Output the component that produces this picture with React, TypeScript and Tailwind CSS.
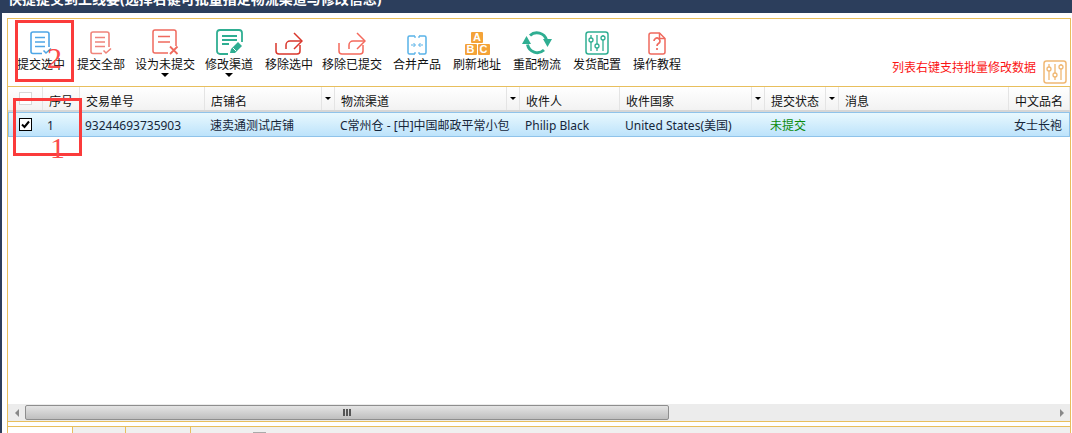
import React from "react";

const font = "font-['Noto_Sans','Noto_Sans_CJK_SC',sans-serif]";

type IconProps = { color: string };

function DocIcon({ color }: IconProps) {
  return (
    <svg width="22" height="24" viewBox="0 0 22 24" fill="none" stroke={color} strokeWidth="1.6">
      <path d="M12 22.500H3a2 2 0 0 1-2-2V3a2 2 0 0 1 2-2h14a2 2 0 0 1 2 2v13" />
      <path d="M5 6.500h10M5 11h10M5 15.500h10" />
      <path d="M13.500 19.500l2.500 2.500 5-4.500" />
    </svg>
  );
}

function UnsubmitIcon() {
  return (
    <svg width="27" height="26" viewBox="0 0 27 26" fill="none" stroke="#ef6a5e" strokeWidth="1.500">
      <path d="M16 24H3a2 2 0 0 1-2-2V3a2 2 0 0 1 2-2h19a2 2 0 0 1 2 2v14" />
      <path d="M6 7.500h12M6 13h12" />
      <path d="M18 17.500l7.500 7.500M25.500 17.500L18 25" strokeWidth="1.800" />
    </svg>
  );
}

function EditIcon() {
  return (
    <svg width="27" height="26" viewBox="0 0 27 26" fill="none" stroke="#2fae92" strokeWidth="1.800">
      <path d="M12 25H4a3 3 0 0 1-3-3V4a3 3 0 0 1 3-3h19a3 3 0 0 1 3 3v9" />
      <path d="M6 7h15M6 11h15M6 15h7" strokeWidth="2" />
      <path d="M14 24l1-4 7-7 4 4-7 7z" fill="#2fae92" stroke="none" />
      <path d="M17 19l3 3" stroke="#ffffff" strokeWidth="1" />
    </svg>
  );
}

function ExportIcon({ color }: IconProps) {
  return (
    <svg width="28" height="24" viewBox="0 0 28 24" fill="none" stroke={color} strokeWidth="1.500">
      <path d="M1 12v8a3 3 0 0 0 3 3h18a3 3 0 0 0 3-3v-6" />
      <path d="M11 18v-4a4 4 0 0 1 4-4h12" />
      <path d="M19 2l8 8-8 8" />
    </svg>
  );
}

function MergeIcon() {
  return (
    <svg width="20" height="20" viewBox="0 0 20 20" fill="none" stroke="#58b2e8" strokeWidth="1.500">
      <path d="M8 1H2.500A1.500 1.500 0 0 0 1 2.500v15A1.500 1.500 0 0 0 2.500 19H8M12 1h5.500A1.500 1.500 0 0 1 19 2.500v15a1.500 1.500 0 0 1-1.500 1.500H12" />
      <path d="M8 1v2M8 17v2M12 1v2M12 17v2" strokeWidth="1.200" />
      <path d="M4 10h4M6.500 8l2 2-2 2M16 10h-4M13.500 8l-2 2 2 2" strokeWidth="1" />
    </svg>
  );
}

function BlocksIcon() {
  const block = "flex h-[11px] w-[12px] items-center justify-center rounded-[1px] bg-[#f4a338] text-[11px] font-bold leading-none text-white font-['Liberation_Sans',sans-serif]";
  return (
    <div className="flex w-[24px] flex-col items-center gap-[1px]">
      <div className={block}>A</div>
      <div className="flex gap-[1px]">
        <div className={block}>B</div>
        <div className={block}>C</div>
      </div>
    </div>
  );
}

function RefreshIcon() {
  return (
    <svg width="32" height="25" viewBox="0 0 32 25" fill="none" stroke="#2fae92" strokeWidth="3">
      <path d="M9 5.500A10 10 0 0 1 25.500 10" />
      <path d="M6.500 14.500A10 10 0 0 0 23 20" />
      <path d="M1 14h9L5.500 6z" fill="#2fae92" stroke="none" />
      <path d="M22 9h9l-4.500 8z" fill="#2fae92" stroke="none" />
    </svg>
  );
}

function SlidersIcon({ color, size }: { color: string; size: number }) {
  return (
    <svg width={size} height={size} viewBox="0 0 24 24" fill="none" stroke={color} strokeWidth="1.300">
      <rect x="1" y="1" width="22" height="22" rx="2.500" strokeWidth="1.500" />
      <path d="M6 4v3M6 11v9M12 4v9M12 17v3M18 4v1M18 9v11" />
      <circle cx="6" cy="9" r="2" />
      <circle cx="12" cy="15" r="2" />
      <circle cx="18" cy="7" r="2" />
    </svg>
  );
}

function HelpIcon() {
  return (
    <svg width="18" height="23" viewBox="0 0 18 23" fill="none" stroke="#ef6a5e" strokeWidth="1.500">
      <path d="M11.500 1H3a2 2 0 0 0-2 2v17a2 2 0 0 0 2 2h12a2 2 0 0 0 2-2V6.500z" />
      <path d="M11.500 1v5.500H17" />
      <path d="M6 9a3 3 0 1 1 4.500 2.600c-1 .6-1.500 1.200-1.500 2.400" strokeWidth="1.700" />
      <path d="M9 16v2" strokeWidth="1.700" />
    </svg>
  );
}

const tools = [
  { label: "提交选中", width: "w-[66px]", icon: <DocIcon color="#4ea6e6" /> },
  { label: "提交全部", width: "w-[54px]", icon: <DocIcon color="#f0847a" /> },
  { label: "设为未提交", width: "w-[74px]", icon: <UnsubmitIcon />, menu: true },
  { label: "修改渠道", width: "w-[54px]", icon: <EditIcon />, menu: true },
  { label: "移除选中", width: "w-[66px]", icon: <ExportIcon color="#d9362b" /> },
  { label: "移除已提交", width: "w-[60px]", icon: <ExportIcon color="#f4695c" /> },
  { label: "合并产品", width: "w-[70px]", icon: <MergeIcon /> },
  { label: "刷新地址", width: "w-[50px]", icon: <BlocksIcon /> },
  { label: "重配物流", width: "w-[70px]", icon: <RefreshIcon /> },
  { label: "发货配置", width: "w-[50px]", icon: <SlidersIcon color="#2fae92" size={24} /> },
  { label: "操作教程", width: "w-[70px]", icon: <HelpIcon /> },
];

const columns = [
  { label: "序号", width: "w-[37px]", value: "1", arrow: false },
  { label: "交易单号", width: "w-[125px]", value: "93244693735903", arrow: false },
  { label: "店铺名", width: "w-[130px]", value: "速卖通测试店铺", arrow: true },
  { label: "物流渠道", width: "w-[185px]", value: "C常州仓 - [中]中国邮政平常小包", arrow: true },
  { label: "收件人", width: "w-[100px]", value: "Philip Black", arrow: false },
  { label: "收件国家", width: "w-[145px]", value: "United States(美国)", arrow: true },
  { label: "提交状态", width: "w-[74px]", value: "未提交", arrow: true, green: true },
  { label: "消息", width: "w-[170px]", value: "", arrow: false },
  { label: "中文品名", width: "w-[61px]", value: "女士长袍", arrow: false },
];

function ToolButton({ label, width, icon, menu }: { label: string; width: string; icon: React.ReactNode; menu?: boolean }) {
  return (
    <div className={`flex flex-col items-center ${width}`}>
      <div className="flex h-[27px] items-end justify-center">{icon}</div>
      <div className="mt-[1px] whitespace-nowrap text-[12px] leading-[17px] text-[#111]">{label}</div>
      {menu && <div className="h-0 w-0 border-x-[4px] border-t-[4px] border-x-transparent border-t-black" />}
    </div>
  );
}

function HeaderCell({ label, width, arrow }: { label: string; width: string; arrow: boolean }) {
  return (
    <div className={`flex h-full shrink-0 items-center justify-between border-r border-[#e4e4e4] ${width}`}>
      <span className="whitespace-nowrap pl-[6px] pt-[6px] text-[12px] text-[#111]">{label}</span>
      {arrow && (
        <span className="flex h-full w-[13px] items-center justify-center border-l border-[#e4e4e4]">
          <span className="h-0 w-0 border-x-[3px] border-t-[3px] border-x-transparent border-t-black" />
        </span>
      )}
    </div>
  );
}

export default function App() {
  return (
    <div className={`flex h-[433px] w-[1072px] flex-col overflow-hidden bg-white ${font}`}>
      <div className="h-[13px] shrink-0 overflow-hidden bg-[#2c3e5c] pl-[8px]">
        <div className="mt-[-10px] whitespace-nowrap text-[14px] font-bold leading-[18px] text-white">
          快捷提交到上线要(选择右键可批量指定物流渠道与修改信息)
        </div>
      </div>
      <div className="relative flex min-h-0 flex-1 pt-[5px]">
        <div className="w-[2px] shrink-0 bg-[#2c3e5c] mt-[-5px]" />
        <div className="ml-[5px] mr-[1px] flex min-w-0 flex-1 flex-col border-x border-t border-[#e8bf5d]">
          <div className="flex h-[68px] shrink-0 border-b border-[#e8bf5d] pt-[9px]">
            {tools.map((t) => (
              <ToolButton key={t.label} {...t} />
            ))}
            <div className="ml-auto mr-[3px] flex items-center gap-[7px] self-end pb-[2px]">
              <span className="mb-[7px] whitespace-nowrap text-[12px] text-[#fb1414]">列表右键支持批量修改数据</span>
              <SlidersIcon color="#f0b874" size={24} />
            </div>
          </div>

          <div className="flex h-[25px] shrink-0 border-b-2 border-[#d6d6d6] bg-gradient-to-b from-white to-[#f2f2f2]">
            <div className="flex h-full w-[35px] shrink-0 items-center justify-center border-r border-[#e4e4e4]">
              <div className="ml-[1px] h-[13px] w-[13px] border border-[#d8d8d8] bg-white" />
            </div>
            {columns.map((c) => (
              <HeaderCell key={c.label} label={c.label} width={c.width} arrow={c.arrow} />
            ))}
          </div>

          <div className="flex h-[25px] shrink-0 items-center border border-[#8fc3ea] bg-gradient-to-b from-[#e8f8fe] to-[#bde3fb]">
            <div className="flex w-[34px] shrink-0 items-center justify-center pr-[2px]">
              <div className="flex h-[13px] w-[13px] items-center justify-center border border-black bg-white">
                <svg width="11" height="11" viewBox="0 0 11 11" fill="none" stroke="#000" strokeWidth="2">
                  <path d="M2 5.500l2.500 2.500L9 2.500" />
                </svg>
              </div>
            </div>
            {columns.map((c, i) => (
              <div
                key={c.label}
                className={`shrink-0 overflow-hidden whitespace-nowrap pt-[2px] text-[12px] ${i === 0 ? "pl-[4px]" : "pl-[5px]"} ${c.width} ${c.green ? "text-[#0a8a0a]" : "text-[#16263a]"}`}
              >
                {c.value}
              </div>
            ))}
          </div>

          <div className="min-h-0 flex-1 bg-white" />

          <div className="flex h-[17px] shrink-0 items-center bg-[#ececec]">
            <div className="flex w-[17px] shrink-0 justify-center">
              <div className="h-0 w-0 border-y-[4px] border-r-[4px] border-y-transparent border-r-[#888]" />
            </div>
            <div className="flex h-[15px] w-[644px] items-center justify-end rounded-[2px] border border-[#8e8e8e] bg-gradient-to-b from-[#e4e4e4] to-[#bfbfbf] pr-[317px]">
              <div className="flex gap-[1px]">
                <div className="h-[7px] w-[2px] bg-[#555]" />
                <div className="h-[7px] w-[2px] bg-[#555]" />
                <div className="h-[7px] w-[2px] bg-[#555]" />
              </div>
            </div>
            <div className="ml-auto flex w-[17px] shrink-0 justify-center">
              <div className="h-0 w-0 border-y-[4px] border-l-[4px] border-y-transparent border-l-[#888]" />
            </div>
          </div>

          <div className="h-[6px] shrink-0 border-y border-[#e8bf5d] bg-white" />

          <div className="flex h-[6px] shrink-0 bg-[#f0f0f0]">
            <div className="w-[65px] border-r border-[#e8bf5d] bg-white" />
            <div className="w-[53px] border-r border-[#e8bf5d]" />
            <div className="w-[65px] border-r border-[#e8bf5d]" />
            <div className="ml-[62px] mt-auto h-[1px] w-[13px] bg-[#aaaaaa]" />
          </div>
        </div>

        <div className="absolute left-[15px] top-[7px] h-[62px] w-[59px] border-[3px] border-[#fb3b3b]" />
        <div className="absolute left-[13px] top-[85px] h-[58px] w-[69px] border-[3px] border-[#fb3b3b]" />
        <div className="absolute left-[47px] top-[28px] font-['Liberation_Serif',serif] text-[30px] leading-[34px] text-[#fb4a4a]">2</div>
        <div className="absolute left-[50px] top-[118px] font-['Liberation_Serif',serif] text-[30px] leading-[34px] text-[#fb4a4a]">1</div>
      </div>
    </div>
  );
}
